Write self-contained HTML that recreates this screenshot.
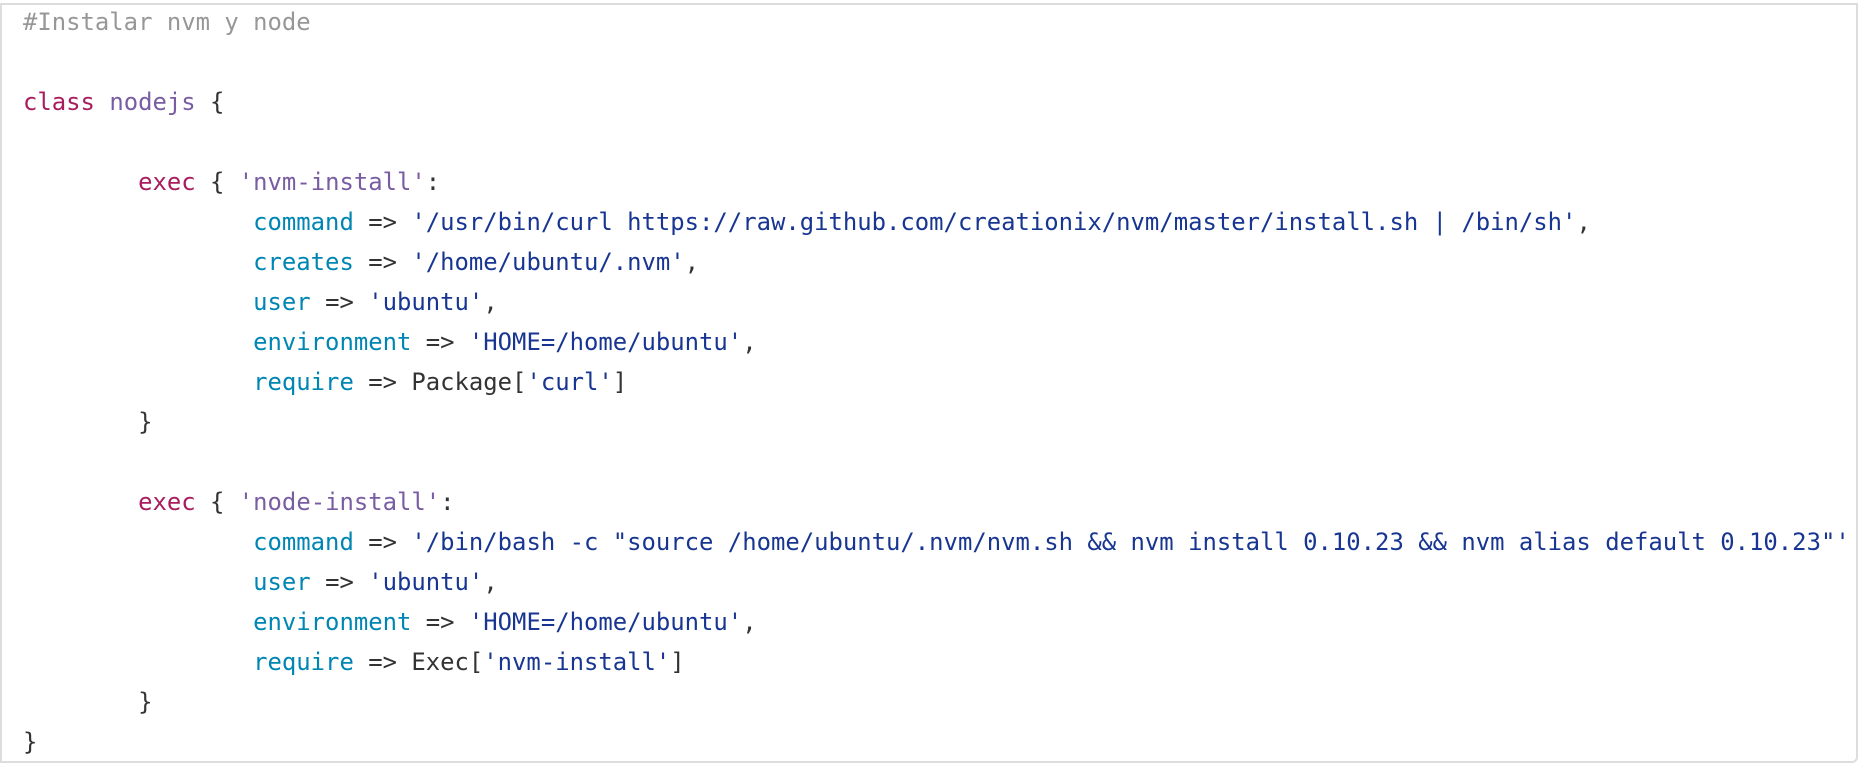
<!DOCTYPE html>
<html><head><meta charset="utf-8"><style>
html,body{margin:0;padding:0;background:#fff;width:1864px;height:766px;overflow:hidden}
.box{position:absolute;left:0;top:3px;width:1858px;height:760px;border:2px solid #ddd;border-radius:0 0 6px 0;box-sizing:border-box;overflow:hidden;background:#fff}
pre{margin:-3px 0 0 0;padding:0 0 0 21px;font-family:"DejaVu Sans Mono","Liberation Mono",monospace;font-size:23.9px;line-height:40px;color:#333;white-space:pre}
.c{color:#969896}.k{color:#a71d5d}.n{color:#795da3}.a{color:#0086b3}.s{color:#183691}
</style></head><body>
<div class="box"><pre><span class="c">#Instalar nvm y node</span>

<span class="k">class</span> <span class="n">nodejs</span> {

        <span class="k">exec</span> { <span class="n">'nvm-install'</span>:
                <span class="a">command</span> =&gt; <span class="s">'/usr/bin/curl https://raw.github.com/creationix/nvm/master/install.sh | /bin/sh'</span>,
                <span class="a">creates</span> =&gt; <span class="s">'/home/ubuntu/.nvm'</span>,
                <span class="a">user</span> =&gt; <span class="s">'ubuntu'</span>,
                <span class="a">environment</span> =&gt; <span class="s">'HOME=/home/ubuntu'</span>,
                <span class="a">require</span> =&gt; Package[<span class="s">'curl'</span>]
        }

        <span class="k">exec</span> { <span class="n">'node-install'</span>:
                <span class="a">command</span> =&gt; <span class="s">'/bin/bash -c "source /home/ubuntu/.nvm/nvm.sh &amp;&amp; nvm install 0.10.23 &amp;&amp; nvm alias default 0.10.23"'</span>
                <span class="a">user</span> =&gt; <span class="s">'ubuntu'</span>,
                <span class="a">environment</span> =&gt; <span class="s">'HOME=/home/ubuntu'</span>,
                <span class="a">require</span> =&gt; Exec[<span class="s">'nvm-install'</span>]
        }
}</pre></div>
</body></html>
